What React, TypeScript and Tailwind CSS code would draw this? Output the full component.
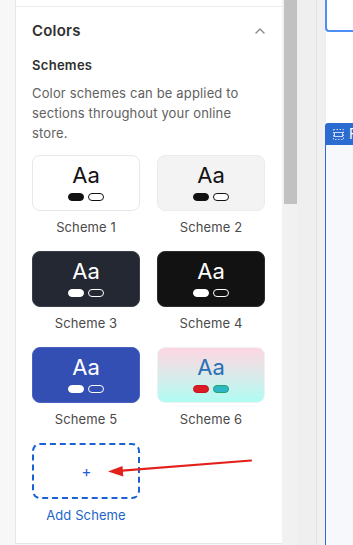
import React from "react";

type Scheme = {
  name: string;
  card: string;
  text: string;
  fill: string;
  outline: string;
};

const schemes: Scheme[] = [
  {
    name: "Scheme 1",
    card: "bg-white border-[#e8e8e8]",
    text: "text-[#121212]",
    fill: "bg-[#121212] border-[#121212]",
    outline: "bg-white border-[#121212]",
  },
  {
    name: "Scheme 2",
    card: "bg-[#f3f3f3] border-[#ececec]",
    text: "text-[#121212]",
    fill: "bg-[#121212] border-[#121212]",
    outline: "bg-white border-[#121212]",
  },
  {
    name: "Scheme 3",
    card: "bg-[#242833] border-[#3a3e48]",
    text: "text-white",
    fill: "bg-white border-white",
    outline: "bg-[#242833] border-white",
  },
  {
    name: "Scheme 4",
    card: "bg-[#121212] border-[#2c2c2c]",
    text: "text-white",
    fill: "bg-white border-white",
    outline: "bg-[#121212] border-white",
  },
  {
    name: "Scheme 5",
    card: "bg-[#334fb4] border-[#4862c0]",
    text: "text-white",
    fill: "bg-white border-white",
    outline: "bg-[#334fb4] border-white",
  },
  {
    name: "Scheme 6",
    card: "bg-gradient-to-b from-[#fdd6e1] to-[#aefcf3] border-[#eef2f2]",
    text: "text-[#2a6fb4]",
    fill: "bg-[#dc1c24] border-[#c8161e]",
    outline: "bg-[#2eb7c6] border-[#22a36d]",
  },
];

function SchemeCard({ s }: { s: Scheme }) {
  return (
    <div className="flex flex-col items-center">
      <div className={`w-[108px] h-[56px] rounded-[8px] border flex flex-col items-center pt-[7px] ${s.card}`}>
        <span className={`text-[22px] leading-[24px] ${s.text}`}>Aa</span>
        <div className="flex gap-[4px] mt-[6px]">
          <span className={`w-[16px] h-[8px] rounded-full border ${s.fill}`} />
          <span className={`w-[16px] h-[8px] rounded-full border ${s.outline}`} />
        </div>
      </div>
      <p className="mt-[6px] text-[13px] leading-[20px] text-[#4a4a4a] tracking-[0.1px]">{s.name}</p>
    </div>
  );
}

export default function App() {
  return (
    <div
      className="relative w-[353px] h-[545px] overflow-hidden flex bg-[#f7f7f7]"
      style={{ fontFamily: "Inter, 'Noto Sans', sans-serif" }}
    >
      {/* gutter */}
      <div className="w-[15px] shrink-0" />

      {/* settings panel */}
      <section className="w-[267px] h-[544px] shrink-0 bg-white border-l border-b border-[#e6e6e6] flex flex-col">
        <div className="h-[6px]" />
        <div className="border-t border-[#ebebeb] px-4">
          <div className="h-[48px] flex items-center justify-between">
            <h2 className="text-[15px] font-semibold text-[#303030] tracking-[0.2px]">Colors</h2>
            <svg width="12" height="8" viewBox="0 0 12 8">
              <path d="M2 6 L6 2 L10 6" fill="none" stroke="#8a8a8a" strokeWidth="1.4" strokeLinecap="round" strokeLinejoin="round" />
            </svg>
          </div>

          <h3 className="text-[13px] leading-[20px] font-semibold text-[#303030] tracking-[0.3px]">Schemes</h3>
          <p className="mt-2 text-[13px] leading-[20px] text-[#616161] tracking-[0.15px] pr-1">
            Color schemes can be applied to sections throughout your online store.
          </p>

          <div className="mt-3 grid grid-cols-[108px_108px] gap-x-[17px] gap-y-[14px]">
            {schemes.map((s) => (
              <SchemeCard key={s.name} s={s} />
            ))}

            <div className="flex flex-col items-center">
              <div className="w-[108px] h-[56px] rounded-[8px] border-2 border-dashed border-[#1a62d4] flex items-center justify-center">
                <span className="text-[15px] leading-none text-[#1a62d4] pl-px">+</span>
              </div>
              <p className="mt-[6px] text-[13px] leading-[20px] text-[#1d64c8] tracking-[0.1px]">Add Scheme</p>
            </div>
          </div>
        </div>
      </section>

      {/* scrollbar */}
      <div className="w-[15px] shrink-0 bg-[#f1f1f1] pl-[2px]">
        <div className="w-[13px] h-[204px] bg-[#c1c1c1]" />
      </div>

      <div className="w-[19px] shrink-0 bg-[#efefef]" />
      <div className="w-px shrink-0 bg-[#e2e2e2]" />
      <div className="w-[8px] shrink-0 bg-[#f0f0f0]" />

      {/* preview */}
      <div className="flex-1 flex flex-col bg-white">
        <div className="h-[32px] border-l-2 border-b-2 border-[#4d8ef7] rounded-bl-[4px] bg-white" />
        <div className="h-[91px] border-l border-[#ececec] bg-white" />
        <div className="h-[22px] bg-[#2c6bcf] rounded-tl-[3px] flex items-center pl-[8px] gap-[5px] overflow-hidden">
          <svg width="11" height="11" viewBox="0 0 11 11" className="shrink-0">
            <rect x="0.5" y="0.5" width="10" height="10" fill="none" stroke="#c9d9f5" strokeDasharray="1.5 1.5" />
            <rect x="1.5" y="3.5" width="8" height="4" fill="none" stroke="#c9d9f5" />
          </svg>
          <span className="text-[14px] text-white leading-none">F</span>
        </div>
        <div className="flex-1 bg-[#f6f8fc] border-l border-[#2c6bcf]" />
      </div>

      {/* annotation arrow */}
      <svg className="absolute left-0 top-0 pointer-events-none" width="353" height="545" viewBox="0 0 353 545">
        <line x1="251" y1="460.5" x2="119" y2="470.8" stroke="#e3201b" strokeWidth="2.2" strokeLinecap="round" />
        <polygon points="108,471.6 122.5,466 123.3,476.6" fill="#e3201b" />
      </svg>
    </div>
  );
}
